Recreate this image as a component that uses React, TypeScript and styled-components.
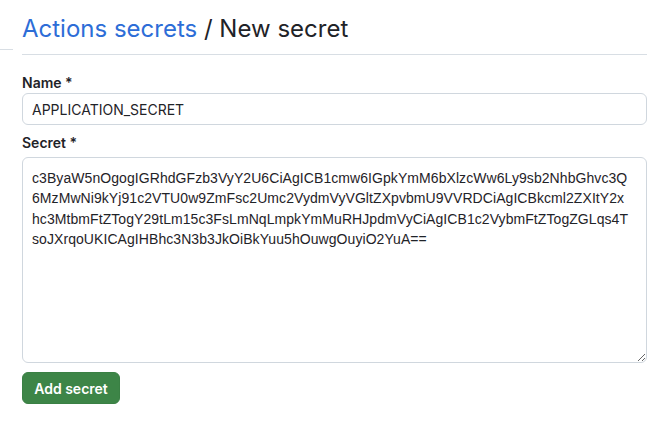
import * as React from "react";
import styled, { createGlobalStyle } from "styled-components";

const colors = {
  text: "#1f2328",
  link: "#2d6dd7",
  border: "#d0d7de",
  divider: "#d8dee4",
  green: "#3d8547",
  greenBorder: "#3a8044",
  white: "#ffffff",
};

const GlobalStyle = createGlobalStyle`
  html, body {
    margin: 0;
    padding: 0;
    background: ${colors.white};
    font-family: Inter, "Liberation Sans", Arial, sans-serif;
    color: ${colors.text};
  }
`;

const Page = styled.div`
  display: flex;
  width: 667px;
  min-height: 435px;
`;

const Sidebar = styled.div`
  width: 13px;
  flex-shrink: 0;
  padding-top: 49px;

  .rule {
    height: 1px;
    background: ${colors.divider};
  }
`;

const Main = styled.main`
  flex: 1;
  padding: 14px 20px 0 9px;
`;

const Header = styled.div`
  padding-bottom: 10px;
  border-bottom: 1px solid ${colors.divider};
`;

const Title = styled.h1`
  margin: 0;
  font-size: 24px;
  line-height: 30px;
  font-weight: 400;
  color: ${colors.text};

  a {
    color: ${colors.link};
    text-decoration: none;
  }
`;

const Form = styled.form`
  display: flex;
  flex-direction: column;
  padding-top: 18px;
`;

const Label = styled.label<{ $gap: number; $top?: number }>`
  display: block;
  font-size: 14px;
  line-height: 20px;
  font-weight: 600;
  margin-top: ${(p) => p.$top || 0}px;
  margin-bottom: ${(p) => p.$gap}px;
`;

const Input = styled.input`
  box-sizing: border-box;
  width: 100%;
  height: 32px;
  padding: 0 9px;
  font-family: inherit;
  font-size: 14px;
  color: ${colors.text};
  border: 1px solid ${colors.border};
  border-radius: 6px;
  background: ${colors.white};
  outline: none;
`;

const TextArea = styled.textarea`
  box-sizing: border-box;
  width: 100%;
  height: 206px;
  padding: 10px 8px 10px 9px;
  font-family: "Liberation Sans", Arial, sans-serif;
  font-size: 14px;
  line-height: 20.4px;
  letter-spacing: 0.07px;
  color: ${colors.text};
  border: 1px solid ${colors.border};
  border-radius: 6px;
  background: ${colors.white};
  outline: none;
  resize: vertical;
  white-space: pre;
  overflow: hidden;
  display: block;
`;

const Button = styled.button`
  align-self: flex-start;
  margin-top: 9px;
  width: 98px;
  height: 32px;
  padding: 0;
  font-family: inherit;
  font-size: 14px;
  font-weight: 600;
  color: ${colors.white};
  background: ${colors.green};
  border: 1px solid ${colors.greenBorder};
  border-radius: 6px;
  cursor: pointer;
`;

const secretLines = [
  "c3ByaW5nOgogIGRhdGFzb3VyY2U6CiAgICB1cmw6IGpkYmM6bXlzcWw6Ly9sb2NhbGhvc3Q",
  "6MzMwNi9kYj91c2VTU0w9ZmFsc2Umc2VydmVyVGltZXpvbmU9VVRDCiAgICBkcml2ZXItY2x",
  "hc3MtbmFtZTogY29tLm15c3FsLmNqLmpkYmMuRHJpdmVyCiAgICB1c2VybmFtZTogZGLqs4T",
  "soJXrqoUKICAgIHBhc3N3b3JkOiBkYuu5hOuwgOuyiO2YuA==",
];

export default function App() {
  return (
    <Page>
      <GlobalStyle />
      <Sidebar>
        <div className="rule" />
      </Sidebar>
      <Main>
        <Header>
          <Title>
            <a href="#">Actions secrets</a> / New secret
          </Title>
        </Header>
        <Form onSubmit={(e) => e.preventDefault()}>
          <Label htmlFor="name" $gap={0}>
            Name *
          </Label>
          <Input id="name" defaultValue="APPLICATION_SECRET" />
          <Label htmlFor="secret" $top={8} $gap={4}>
            Secret *
          </Label>
          <TextArea
            id="secret"
            defaultValue={secretLines.join("\n")}
            spellCheck={false}
          />
          <Button type="submit">Add secret</Button>
        </Form>
      </Main>
    </Page>
  );
}
